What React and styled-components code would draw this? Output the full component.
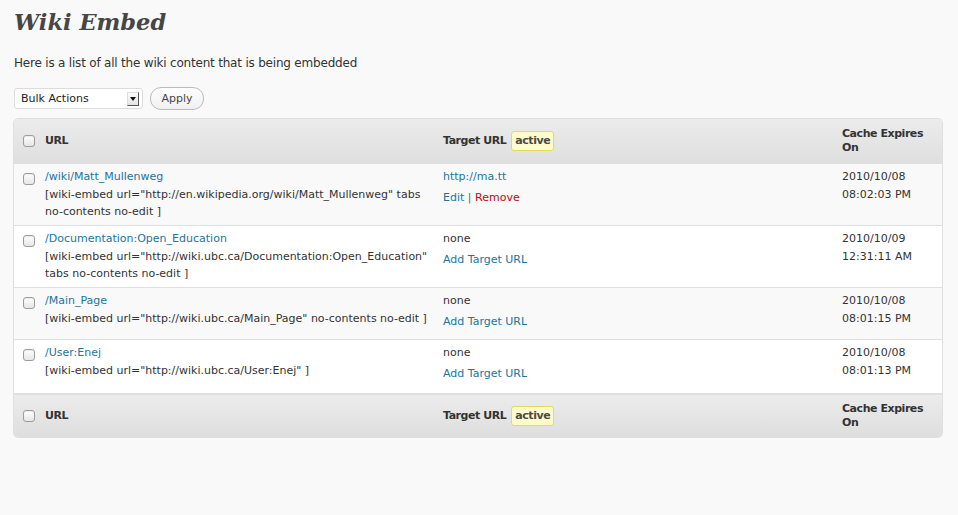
import React from 'react';
import styled, { createGlobalStyle } from 'styled-components';

const Global = createGlobalStyle`
  html, body { margin: 0; padding: 0; background: #f9f9f9; }
  body { font-family: "DejaVu Sans", "Liberation Sans", sans-serif; font-size: 12px; color: #333; }
`;

const Page = styled.div`
  padding: 0 15px 0 13px;
`;

const Title = styled.h2`
  margin: 0;
  padding: 8px 0 0 1px;
  font: italic bold 22.5px/29px "DejaVu Serif", serif;
  color: #464646;
`;

const Intro = styled.p`
  margin: 17px 0 0 1px;
  line-height: 18px;
  font-size: 12px;
  letter-spacing: -0.2px;
  color: #333;
`;

const TableNav = styled.div`
  display: flex;
  align-items: center;
  gap: 7px;
  margin: 15px 0 0 1px;
  height: 23px;
`;

const FauxSelect = styled.div`
  box-sizing: border-box;
  width: 129px;
  height: 21px;
  display: flex;
  align-items: center;
  justify-content: space-between;
  padding: 0 3px 0 6px;
  background: #fff;
  border: 1px solid #dcdcdc;
  border-radius: 3px;
  font-size: 11px;
  color: #222;
`;

const SelectArrow = styled.span`
  box-sizing: border-box;
  width: 12px;
  height: 14px;
  display: flex;
  align-items: center;
  justify-content: center;
  background: linear-gradient(#fdfdfd, #e4e4e4);
  border-right: 1px solid #555;
  border-bottom: 1px solid #555;
  border-top: 1px solid #ddd;
  border-left: 1px solid #ddd;
  &::after {
    content: "";
    border-left: 3px solid transparent;
    border-right: 3px solid transparent;
    border-top: 4px solid #111;
  }
`;

const Button = styled.button`
  box-sizing: border-box;
  height: 23px;
  width: 54px;
  padding: 0;
  border: 1px solid #bbb;
  border-radius: 11px;
  background: linear-gradient(#fefefe, #f0f0f0);
  font-family: inherit;
  font-size: 11px;
  color: #464646;
`;

const Table = styled.table`
  margin-top: 8px;
  width: 930px;
  table-layout: fixed;
  border-collapse: separate;
  border-spacing: 0;
  border: 1px solid #dfdfdf;
  border-radius: 5px;
  overflow: hidden;
  background: #f9f9f9;
`;

const HeadRow = styled.tr`
  background: linear-gradient(#ececec, #dedede);
`;

const Th = styled.th`
  text-align: left;
  vertical-align: middle;
  padding: ${p => (p.$footer ? '7px 7px 7px' : '8px 7px 9px')};
  line-height: 14px;
  font-size: 11px;
  font-weight: bold;
  letter-spacing: -0.45px;
  color: #333;
  ${p => p.$footer && 'border-top: 1px solid #dfdfdf;'}
`;

const CheckTh = styled(Th)`
  padding-left: 9px;
  padding-right: 0;
`;

const Row = styled.tr`
  background: ${p => (p.$alt ? '#f9f9f9' : '#ffffff')};
  &:last-child > td {
    padding-bottom: 7px;
  }
`;

const Td = styled.td`
  vertical-align: top;
  padding: 4px 7px 5px;
  line-height: 18px;
  border-bottom: 1px solid #dfdfdf;
  font-size: 11px;
  color: #333;
  word-wrap: break-word;
`;

const CheckTd = styled(Td)`
  padding: 9px 0 0 9px;
`;

const Check = styled.span`
  display: block;
  box-sizing: border-box;
  width: 12px;
  height: 12px;
  border: 1px solid #9c9c9c;
  border-radius: 3px;
  background: linear-gradient(#ffffff, #e6e6e6);
  box-shadow: inset 0 1px 1px rgba(0, 0, 0, 0.08);
`;

const Link = styled.a`
  color: #21759b;
  text-decoration: none;
  cursor: pointer;
`;

const Danger = styled(Link)`
  color: #bc0b0b;
`;

const Embed = styled.div`
  line-height: 17px;
`;

const Actions = styled.div`
  padding: 3px 0 3px;
  color: #666;
`;

const Badge = styled.span`
  display: inline-block;
  margin-left: 5px;
  padding: 2px 3px;
  line-height: 14px;
  background: #fffbcc;
  border: 1px solid #e6db55;
  border-radius: 3px;
  color: #4a4a4a;
  font-weight: bold;
`;

const rows = [
  {
    url: '/wiki/Matt_Mullenweg',
    embed: '[wiki-embed url="http://en.wikipedia.org/wiki/Matt_Mullenweg" tabs no-contents no-edit ]',
    target: 'http://ma.tt',
    date: '2010/10/08',
    time: '08:02:03 PM',
  },
  {
    url: '/Documentation:Open_Education',
    embed: '[wiki-embed url="http://wiki.ubc.ca/Documentation:Open_Education" tabs no-contents no-edit ]',
    target: null,
    date: '2010/10/09',
    time: '12:31:11 AM',
  },
  {
    url: '/Main_Page',
    embed: '[wiki-embed url="http://wiki.ubc.ca/Main_Page" no-contents no-edit ]',
    target: null,
    date: '2010/10/08',
    time: '08:01:15 PM',
  },
  {
    url: '/User:Enej',
    embed: '[wiki-embed url="http://wiki.ubc.ca/User:Enej" ]',
    target: null,
    date: '2010/10/08',
    time: '08:01:13 PM',
  },
];

function HeaderRow({ footer }) {
  return (
    <HeadRow>
      <CheckTh $footer={footer}><Check /></CheckTh>
      <Th $footer={footer}>URL</Th>
      <Th $footer={footer}>Target URL<Badge>active</Badge></Th>
      <Th $footer={footer}>Cache Expires On</Th>
    </HeadRow>
  );
}

export default function App() {
  return (
    <Page>
      <Global />
      <Title>Wiki Embed</Title>
      <Intro>Here is a list of all the wiki content that is being embedded</Intro>
      <TableNav>
        <FauxSelect>Bulk Actions<SelectArrow /></FauxSelect>
        <Button>Apply</Button>
      </TableNav>
      <Table>
        <colgroup>
          <col style={{ width: 24 }} />
          <col style={{ width: 398 }} />
          <col style={{ width: 399 }} />
          <col style={{ width: 107 }} />
        </colgroup>
        <thead>
          <HeaderRow />
        </thead>
        <tbody>
          {rows.map((r, i) => (
            <Row key={r.url} $alt={i % 2 === 0}>
              <CheckTd><Check /></CheckTd>
              <Td>
                <Link>{r.url}</Link>
                <Embed>{r.embed}</Embed>
              </Td>
              <Td>
                {r.target ? <Link>{r.target}</Link> : 'none'}
                <Actions>
                  {r.target ? (
                    <>
                      <Link>Edit</Link> | <Danger>Remove</Danger>
                    </>
                  ) : (
                    <Link>Add Target URL</Link>
                  )}
                </Actions>
              </Td>
              <Td>
                {r.date}
                <br />
                {r.time}
              </Td>
            </Row>
          ))}
        </tbody>
        <tfoot>
          <HeaderRow footer />
        </tfoot>
      </Table>
    </Page>
  );
}
